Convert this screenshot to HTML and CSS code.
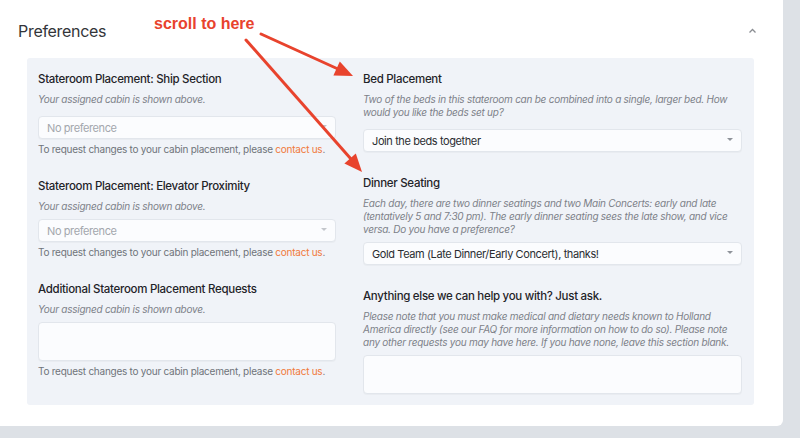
FILE: index.html
```html
<!DOCTYPE html>
<html lang="en">
<head>
<meta charset="utf-8">
<title>Preferences</title>
<link rel="stylesheet" href="styles.css">
</head>
<body>
<div class="page">
  <section class="card">
    <header class="card-header">
      <h2 class="title">Preferences</h2>
      <svg class="chevron" width="9" height="6" viewBox="0 0 9 6"><polyline points="1.5,4.5 4.5,1.5 7.5,4.5" fill="none" stroke="#8a8d92" stroke-width="1.3"/></svg>
    </header>
    <div class="panel">
      <div class="col col-left">
        <div class="field">
          <div class="label">Stateroom Placement: Ship Section</div>
          <div class="desc desc-first">Your assigned cabin is shown above.</div>
          <div class="select disabled"><span>No preference</span><i class="caret"></i></div>
          <div class="help">To request changes to your cabin placement, please <a class="link">contact us</a>.</div>
        </div>
        <div class="field">
          <div class="label">Stateroom Placement: Elevator Proximity</div>
          <div class="desc">Your assigned cabin is shown above.</div>
          <div class="select disabled"><span>No preference</span><i class="caret"></i></div>
          <div class="help">To request changes to your cabin placement, please <a class="link">contact us</a>.</div>
        </div>
        <div class="field">
          <div class="label">Additional Stateroom Placement Requests</div>
          <div class="desc">Your assigned cabin is shown above.</div>
          <div class="textarea"></div>
          <div class="help">To request changes to your cabin placement, please <a class="link">contact us</a>.</div>
        </div>
      </div>
      <div class="col col-right">
        <div class="field">
          <div class="label">Bed Placement</div>
          <div class="desc desc-first">Two of the beds in this stateroom can be combined into a single, larger bed. How would you like the beds set up?</div>
          <div class="select"><span>Join the beds together</span><i class="caret"></i></div>
        </div>
        <div class="field">
          <div class="label">Dinner Seating</div>
          <div class="desc">Each day, there are two dinner seatings and two Main Concerts: early and late (tentatively 5 and 7:30 pm). The early dinner seating sees the late show, and vice versa. Do you have a preference?</div>
          <div class="select"><span>Gold Team (Late Dinner/Early Concert), thanks!</span><i class="caret"></i></div>
        </div>
        <div class="field">
          <div class="label">Anything else we can help you with? Just ask.</div>
          <div class="desc">Please note that you must make medical and dietary needs known to Holland America directly (see our FAQ for more information on how to do so). Please note any other requests you may have here. If you have none, leave this section blank.</div>
          <div class="textarea"></div>
        </div>
      </div>
    </div>
  </section>
  <div class="note">scroll to here</div>
  <svg class="arrows" width="800" height="438" viewBox="0 0 800 438">
    <g stroke="#e8432d" stroke-width="3" stroke-linecap="round" fill="none">
      <line x1="261" y1="34" x2="338" y2="69"/>
      <line x1="246" y1="40" x2="351" y2="159"/>
    </g>
    <g fill="#e8432d">
      <polygon points="353,76 333.4,75.4 339.8,61.6"/>
      <polygon points="362,172 344.4,163.6 355.8,153.4"/>
    </g>
  </svg>
</div>
</body>
</html>
```
FILE: styles.css
```css
html, body {
  margin: 0;
  padding: 0;
}
body {
  background: #dde1e6;
  font-family: Inter, "Noto Sans", "Liberation Sans", sans-serif;
  color: #1f2328;
}
.page {
  position: relative;
  width: 800px;
  height: 438px;
  overflow: hidden;
}
.card {
  width: 783px;
  background: #ffffff;
  border-bottom-right-radius: 6px;
  padding-bottom: 21px;
}
.card-header {
  height: 58px;
  display: flex;
  align-items: center;
  justify-content: space-between;
  padding: 3px 29px 0 18px;
  box-sizing: border-box;
}
.title {
  margin: 0;
  font-size: 16px;
  font-weight: 400;
  color: #333539;
  letter-spacing: -0.3px;
}
.chevron {
  display: block;
  margin-right: -3px;
}
.panel {
  margin-left: 27px;
  width: 727px;
  box-sizing: border-box;
  background: #f0f3f8;
  border-radius: 3px;
  padding: 13px 12px 11px 11px;
  display: grid;
  grid-template-columns: 298px 379px;
  column-gap: 27px;
  align-items: start;
}
.col {
  display: flex;
  flex-direction: column;
}
.col-left { gap: 22px; }
.col-right { gap: 23px; }
.field {
  display: flex;
  flex-direction: column;
}
.label {
  font-size: 11.5px;
  font-weight: 500;
  line-height: 16px;
  letter-spacing: -0.3px;
  margin-bottom: 6px;
  color: #1f2328;
}
.desc {
  font-size: 10px;
  font-style: italic;
  line-height: 13px;
  letter-spacing: -0.25px;
  color: #7d8188;
  margin-bottom: 6px;
}
.desc-first {
  margin-bottom: 10px;
}
.select {
  height: 23px;
  box-sizing: border-box;
  border: 1px solid #e2e6ec;
  border-radius: 4px;
  background: #fbfcfe;
  box-shadow: 0 1px 1px rgba(0, 0, 0, 0.03);
  display: flex;
  align-items: center;
  justify-content: space-between;
  padding: 0 8px 0 8px;
  font-size: 11px;
  letter-spacing: -0.4px;
  color: #2a2d31;
}
.select.disabled {
  color: #a3a7ad;
}
.caret {
  width: 0;
  height: 0;
  border-left: 3px solid transparent;
  border-right: 3px solid transparent;
  border-top: 3px solid #8f939a;
  margin-top: -2px;
}
.select.disabled .caret {
  border-top-color: #c3c6cb;
}
.textarea {
  height: 39px;
  box-sizing: border-box;
  border: 1px solid #e2e6ec;
  border-radius: 4px;
  background: #fbfcfe;
  box-shadow: 0 1px 1px rgba(0, 0, 0, 0.03);
}
.help {
  margin-top: 4px;
  font-size: 10px;
  line-height: 13px;
  letter-spacing: -0.25px;
  color: #6f737a;
}
.link {
  color: #f07a3c;
  text-decoration: none;
}
.note {
  position: absolute;
  left: 154px;
  top: 15px;
  font-family: "Liberation Sans", Arial, sans-serif;
  font-weight: 700;
  font-size: 16px;
  color: #e8432d;
}
.arrows {
  position: absolute;
  left: 0;
  top: 0;
  pointer-events: none;
}
```
